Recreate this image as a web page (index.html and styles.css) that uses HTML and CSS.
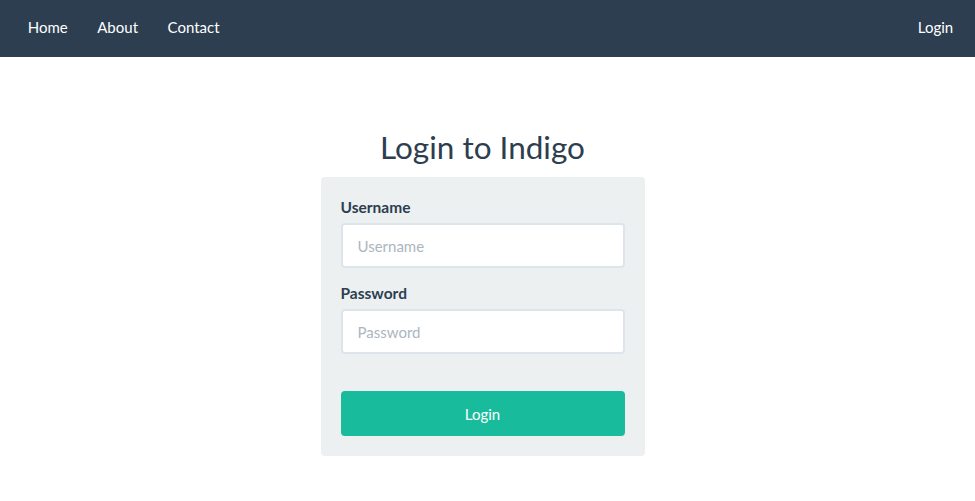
FILE: index.html
```html
<!DOCTYPE html>
<html>
<head>
<meta charset="utf-8">
<link rel="stylesheet" href="styles.css">
</head>
<body>
<nav class="navbar">
  <ul class="nav">
    <li><a href="#">Home</a></li>
    <li><a href="#">About</a></li>
    <li><a href="#">Contact</a></li>
  </ul>
  <ul class="nav">
    <li><a href="#">Login</a></li>
  </ul>
</nav>
<main class="main">
  <h1 class="title">Login to Indigo</h1>
  <form class="well">
    <div class="form-group">
      <label class="label" for="u">Username</label>
      <input class="input" id="u" type="text" placeholder="Username">
    </div>
    <div class="form-group">
      <label class="label" for="p">Password</label>
      <input class="input" id="p" type="password" placeholder="Password">
    </div>
    <button class="btn" type="button">Login</button>
  </form>
</main>
</body>
</html>
```
FILE: styles.css
```css
* { box-sizing: border-box; }
html, body { margin: 0; padding: 0; }
body {
  font-family: Lato, "Open Sans", sans-serif;
  font-size: 15px;
  line-height: 21px;
  color: #2c3e50;
  background: #fff;
}
.navbar {
  height: 57px;
  background: #2c3e50;
  display: flex;
  justify-content: space-between;
  align-items: center;
  padding: 0 7px 0 13px;
}
.nav {
  list-style: none;
  margin: 0;
  padding: 0;
  display: flex;
}
.nav a {
  display: block;
  padding: 0 14.75px;
  color: #fff;
  text-decoration: none;
  line-height: 21px;
  position: relative;
  top: -1px;
}
.main {
  width: 324px;
  margin: 0 auto;
  position: relative;
  left: -5px;
  padding-top: 70px;
}
.title {
  margin: 0 0 10px;
  font-size: 31.5px;
  font-weight: 400;
  line-height: 40px;
  text-align: center;
  color: #2c3e50;
}
.well {
  background: #ecf0f1;
  border-radius: 4px;
  padding: 20px;
  margin: 0;
}
.form-group {
  margin-bottom: 15px;
}
.label {
  display: block;
  font-weight: 700;
  font-size: 15.5px;
  margin-bottom: 5px;
}
.input {
  display: block;
  width: 100%;
  height: 45px;
  padding: 10px 15px;
  border: 2px solid #dce4ec;
  border-radius: 4px;
  background: #fff;
  font-family: inherit;
  font-size: 15px;
  color: #2c3e50;
  outline: none;
}
.input::placeholder { color: #acb6c0; }
.btn {
  display: block;
  width: 100%;
  height: 45px;
  margin-top: 37px;
  border: 0;
  border-radius: 4px;
  background: #18bc9c;
  color: #fff;
  font-family: inherit;
  font-size: 15px;
}
```
